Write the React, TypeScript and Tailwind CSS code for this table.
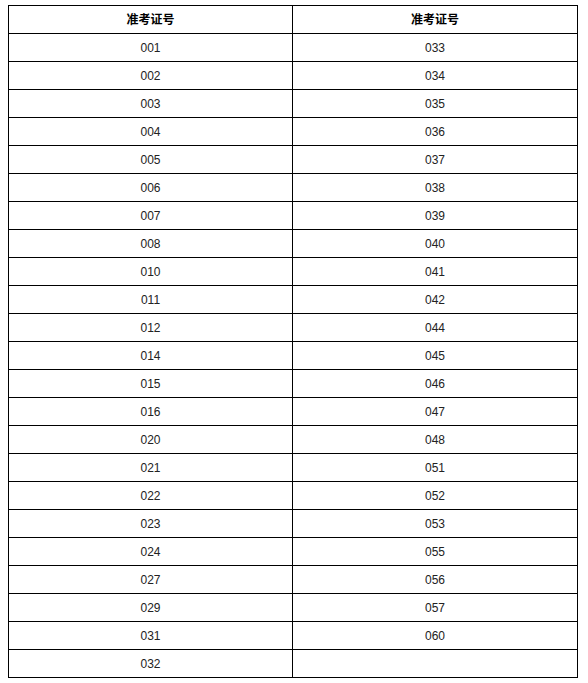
const left = [
  "001", "002", "003", "004", "005", "006", "007", "008", "010", "011", "012", "014",
  "015", "016", "020", "021", "022", "023", "024", "027", "029", "031", "032",
];
const right = [
  "033", "034", "035", "036", "037", "038", "039", "040", "041", "042", "044", "045",
  "046", "047", "048", "051", "052", "053", "055", "056", "057", "060", "",
];

export default function App() {
  const rows = left.map((l, i) => [l, right[i]]);
  return (
    <div className="w-[588px] h-[683px] bg-white pt-[5px] pl-[8px]">
      <div
        className="w-[570px] border-t border-l border-black text-black"
        style={{ fontFamily: '"Liberation Sans", "Noto Sans CJK SC", sans-serif' }}
      >
        <div className="grid grid-cols-[284px_285px]">
          <div className="h-[28px] border-r border-b border-black flex items-center justify-center text-[12px] font-bold">
            准考证号
          </div>
          <div className="h-[28px] border-r border-b border-black flex items-center justify-center text-[12px] font-bold">
            准考证号
          </div>
          {rows.map(([a, b], i) => (
            <div key={i} className="contents">
              <div className="h-[28px] pt-[1px] border-r border-b border-black flex items-center justify-center text-[12px] text-[#222]">
                {a}
              </div>
              <div className="h-[28px] pt-[1px] border-r border-b border-black flex items-center justify-center text-[12px] text-[#222]">
                {b}
              </div>
            </div>
          ))}
        </div>
      </div>
    </div>
  );
}
